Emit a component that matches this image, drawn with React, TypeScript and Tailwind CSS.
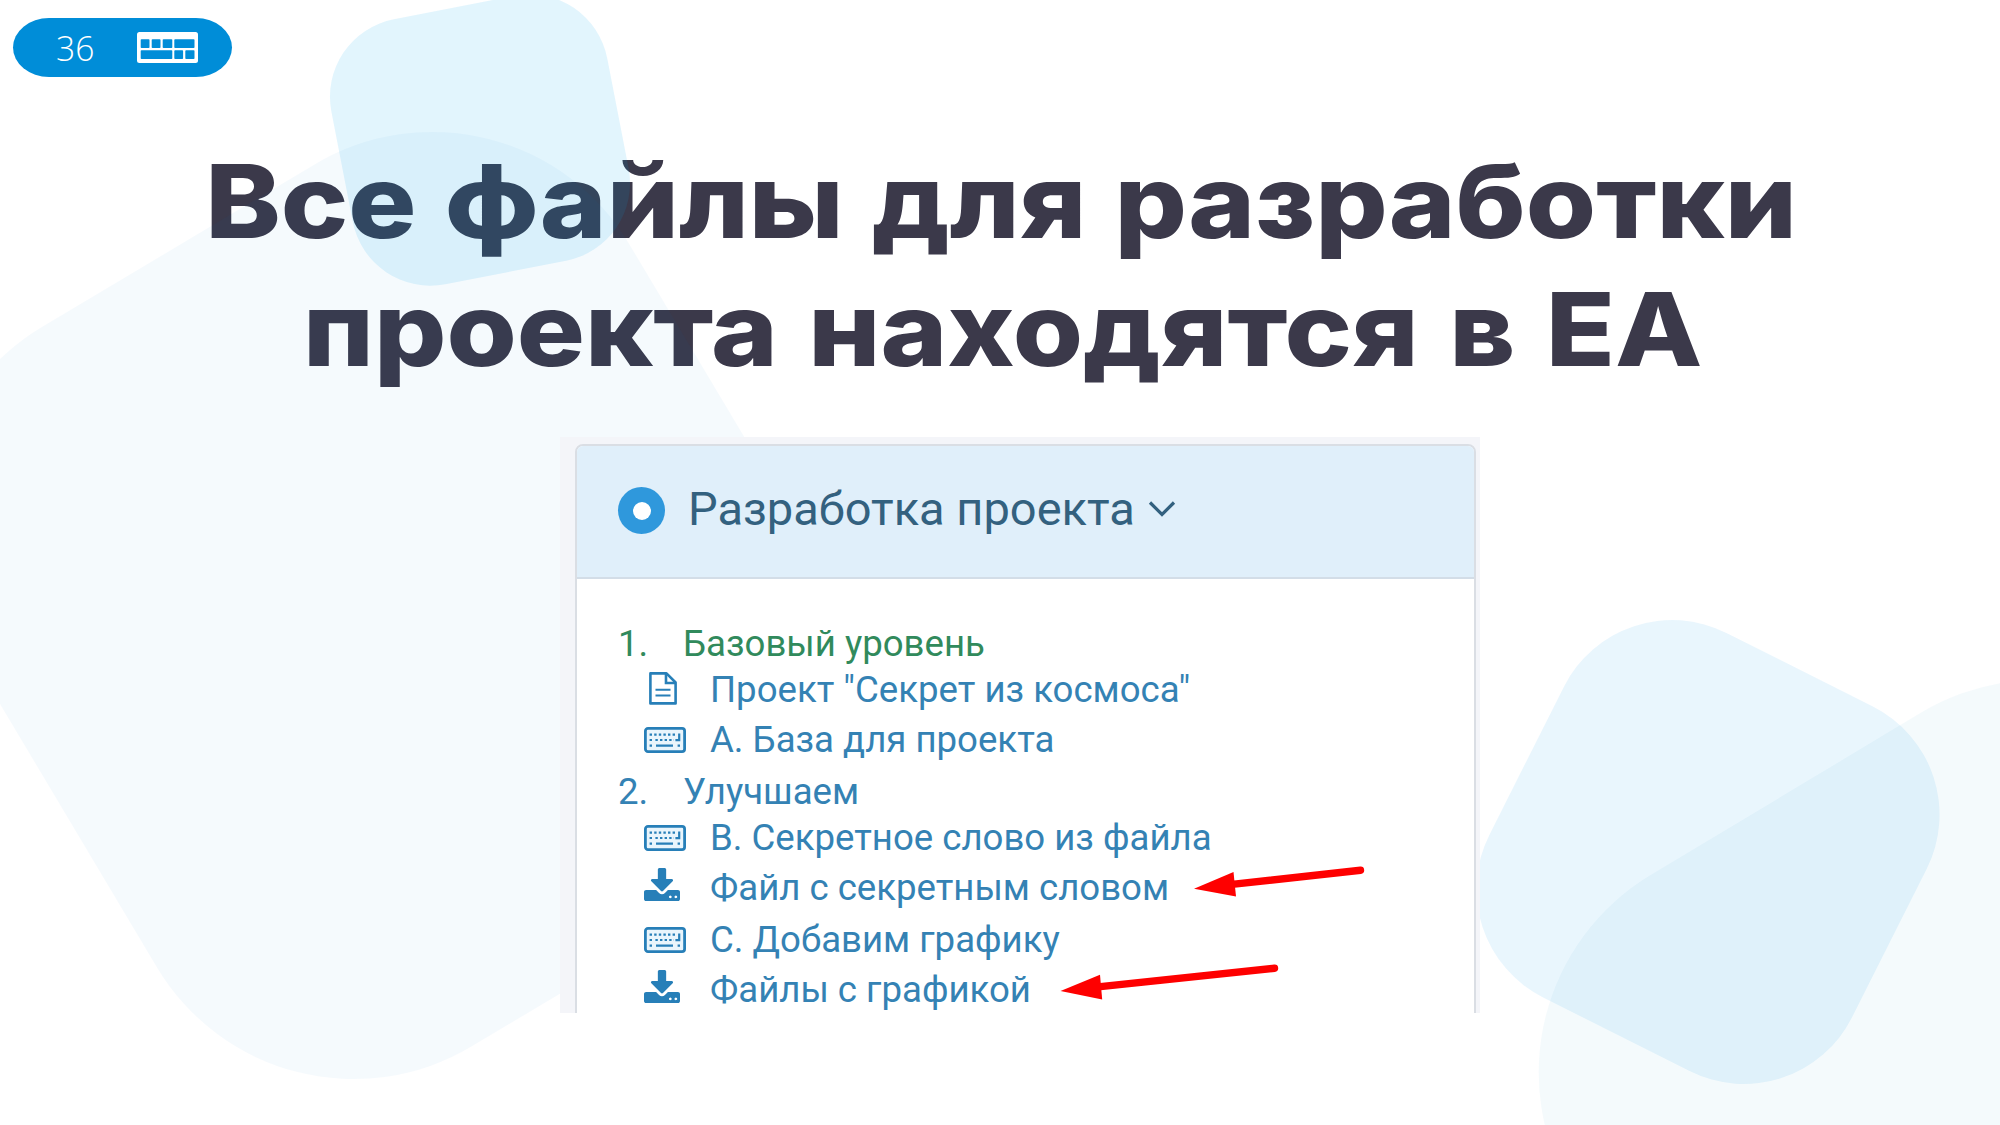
import type { ReactNode } from 'react';

function Backdrop() {
  return (
    <svg className="pointer-events-none absolute inset-0 h-[1125px] w-[2000px]" viewBox="0 0 2000 1125">
      <rect x="-388" y="-419" width="776" height="838" rx="229" fill="#007fcc" fillOpacity="0.04" transform="translate(393 605.5) rotate(-30.8)" />
      <rect x="-140.5" y="-135" width="281" height="270" rx="79" fill="#00a8ed" fillOpacity="0.115" transform="translate(480 140) rotate(-11)" />
      <rect x="-388" y="-420" width="776" height="840" rx="230" fill="#0082bb" fillOpacity="0.042" transform="translate(2002 1154) rotate(-31)" />
      <rect x="-203" y="-204" width="406" height="408" rx="121" fill="#009ce8" fillOpacity="0.087" transform="translate(1708 852) rotate(26.7)" />
    </svg>
  );
}

function BadgeKeyboard() {
  return (
    <svg className="h-[31px] w-[61px]" viewBox="0 0 61 31">
      <rect width="61" height="31" rx="2.5" fill="#fff" />
      <g fill="#008dd8">
        <rect x="3.7" y="7.3" width="8.8" height="8.7" rx="0.8" />
        <rect x="14.7" y="7.3" width="8.8" height="8.7" rx="0.8" />
        <rect x="25.7" y="7.3" width="9.6" height="8.7" rx="0.8" />
        <rect x="37.3" y="7.3" width="20.2" height="8.7" rx="0.8" />
        <rect x="3.7" y="18.2" width="31.6" height="8.8" rx="0.8" />
        <rect x="37.3" y="18.2" width="8.8" height="8.8" rx="0.8" />
        <rect x="48.3" y="18.2" width="9.2" height="8.8" rx="0.8" />
      </g>
    </svg>
  );
}

function FileIcon() {
  return (
    <svg className="mt-[5px] ml-[5px] h-[33px] w-[28px]" viewBox="0 0 28 33" fill="none" stroke="currentColor" strokeWidth="2.6">
      <path d="M1.4 1.4H17.5L26.6 10.5V31.4H1.4Z" strokeLinejoin="round" />
      <path d="M17 1.4V11H26.6" />
      <path d="M6.5 17.8H21.5M6.5 23.4H21.5" strokeWidth="2" />
    </svg>
  );
}

function KeyboardIcon() {
  return (
    <svg className="mt-[10px] h-[26px] w-[42px]" viewBox="0 0 42 26" fill="none" stroke="currentColor">
      <rect x="1.4" y="1.4" width="39.2" height="23.2" rx="2.6" fill="#e9f5fc" strokeWidth="2.8" />
      <path d="M5.6 7.6H32" strokeWidth="2.2" strokeDasharray="2.4 2.2" />
      <path d="M5.6 13H9.4M11.4 13H30" strokeWidth="2.2" strokeDasharray="2.4 2.2" />
      <path d="M5.6 18.6H8M12 18.6H29M33.6 18.6H36" strokeWidth="2.2" />
      <path d="M35.2 6.4V13.2H31.4" strokeWidth="2.2" />
    </svg>
  );
}

function DownloadIcon() {
  return (
    <svg className="mt-[3px] h-[33px] w-[36px]" viewBox="0 128 1664 1536" preserveAspectRatio="none" fill="currentColor">
      <path d="M1280 1472q0-26-19-45t-45-19-45 19-19 45 19 45 45 19 45-19 19-45zm256 0q0-26-19-45t-45-19-45 19-19 45 19 45 45 19 45-19 19-45zm128-224v320q0 40-28 68t-68 28h-1472q-40 0-68-28t-28-68v-320q0-40 28-68t68-28h465l135 136q58 56 136 56t136-56l136-136h464q40 0 68 28t28 68zm-325-569q17 41-14 70l-448 448q-18 19-45 19t-45-19l-448-448q-31-29-14-70 17-39 59-39h256v-448q0-26 19-45t45-19h256q26 0 45 19t19 45v448h256q42 0 59 39z" />
    </svg>
  );
}

function Section({ number, className, children }: { number: string; className: string; children: ReactNode }) {
  return (
    <li className={`flex whitespace-nowrap ${className}`}>
      <span className="ml-[41px] w-[65px]">{number}</span>
      <span>{children}</span>
    </li>
  );
}

function Item({ icon, className, children }: { icon: ReactNode; className: string; children: ReactNode }) {
  return (
    <li className={`flex items-start whitespace-nowrap text-[#3482b4] ${className}`}>
      <span className="ml-[67px] w-[66px] shrink-0 text-[#277fb8]">{icon}</span>
      <span>{children}</span>
    </li>
  );
}

function Arrows() {
  return (
    <svg className="pointer-events-none absolute top-[423px] left-[480px] h-[150px] w-[330px]" viewBox="1040 860 330 150" fill="#fe0000" stroke="#fe0000">
      <path d="M1194 888.7L1233.5 872L1236 896.5Z" stroke="none" />
      <path d="M1232 884.4L1360.5 870.3" strokeWidth="7.4" strokeLinecap="round" />
      <path d="M1060.5 991L1100 974.8L1102.2 999.5Z" stroke="none" />
      <path d="M1098 986.9L1274.5 968.2" strokeWidth="7.4" strokeLinecap="round" />
    </svg>
  );
}

export default function App() {
  return (
    <div className="relative flex h-[1125px] w-[2000px] flex-col items-start overflow-hidden bg-white">
      <div className="mt-[17.5px] ml-[13px] flex h-[59px] w-[219px] items-center rounded-[36px/29.5px] bg-[#008dd8]">
        <span className="ml-[43px] w-[81px] font-['Open_Sans',sans-serif] text-[35px] leading-none font-light text-white">
          <span className="inline-block origin-left scale-x-[0.96]">36</span>
        </span>
        <BadgeKeyboard />
      </div>

      <h1 className="mt-[60.5px] w-full text-center font-['Inter',sans-serif] text-[102px] leading-[128px] font-extrabold whitespace-nowrap text-[#3b394a]">
        <span className="block scale-x-[1.114] pl-[2px] [word-spacing:3px]">Все файлы для разработки</span>
        <span className="block scale-x-[1.114] pl-[5px] [word-spacing:5px]">проекта находятся в EA</span>
      </h1>

      <Backdrop />

      <section className="relative mt-[44px] ml-[560px] h-[576px] w-[920px] overflow-hidden bg-[#f4f5f9] pt-[7px] pr-[4px] pl-[15px] font-['Roboto',sans-serif]">
        <div className="h-[576px] rounded-t-[8px] border-2 border-[#dadee4] bg-white">
          <header className="flex h-[133px] items-start rounded-t-[6px] border-b-2 border-[#d3dde7] bg-[#e0effa]">
            <span className="mt-[41px] ml-[41px] flex size-[47px] items-center justify-center rounded-full bg-[#2f98dc]">
              <span className="size-[18px] rounded-full bg-white" />
            </span>
            <h2 className="mt-[33px] ml-[23px] text-[47px] leading-[60px] whitespace-nowrap text-[#33617f]">Разработка проекта</h2>
            <svg className="mt-[54px] ml-[13px] h-[18px] w-[28px]" viewBox="0 0 28 18" fill="none" stroke="#33617f" strokeWidth="3.2">
              <path d="M2 2.5L14 14.5L26 2.5" />
            </svg>
          </header>
          <ol className="pt-[42px] text-[36.6px] leading-[46px]">
            <Section number="1." className="h-[46px] text-[#318a5c]">Базовый уровень</Section>
            <Item icon={<FileIcon />} className="h-[50px]">Проект "Секрет из космоса"</Item>
            <Item icon={<KeyboardIcon />} className="h-[52px]">A. База для проекта</Item>
            <Section number="2." className="h-[46px] text-[#3482b4]">Улучшаем</Section>
            <Item icon={<KeyboardIcon />} className="h-[50px]">B. Секретное слово из файла</Item>
            <Item icon={<DownloadIcon />} className="h-[52px]">Файл с секретным словом</Item>
            <Item icon={<KeyboardIcon />} className="h-[50px]">C. Добавим графику</Item>
            <Item icon={<DownloadIcon />} className="h-[46px]">Файлы с графикой</Item>
          </ol>
        </div>
        <Arrows />
      </section>
    </div>
  );
}
